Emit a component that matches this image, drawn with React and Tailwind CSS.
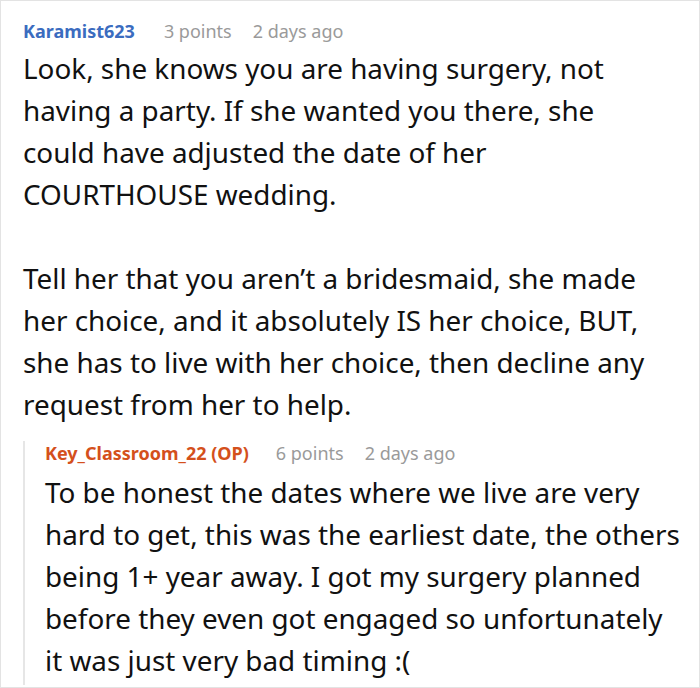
import React from "react";

const Meta = ({ name, color, points, ago, className = "" }) => (
  <div className={`flex items-baseline text-[18px] leading-[24px] whitespace-nowrap ${className}`}>
    <span className={`font-bold ${color}`}>{name}</span>
    <span className="ml-[29px] text-[#9a9a9a]">{points}</span>
    <span className="ml-[21px] text-[#9a9a9a]">{ago}</span>
  </div>
);

// comment bodies are kept with the line breaks of the original card
const Lines = ({ lines }) => (
  <>
    {lines.map((l, i) => (
      <div key={i} className="whitespace-nowrap">
        {l}
      </div>
    ))}
  </>
);

const App = () => {
  return (
    <div
      className="w-[700px] h-[688px] bg-white border border-[#e3e3e3] overflow-hidden text-[#111]"
      style={{ fontFamily: '"Noto Sans", sans-serif' }}
    >
      <div className="pl-[22px] pt-[18px]">
        <Meta name="Karamist623" color="text-[#3b6cbf]" points="3 points" ago="2 days ago" />
        <div className="mt-[4px] text-[27.85px] leading-[42px]">
          <Lines
            lines={[
              "Look, she knows you are having surgery, not",
              "having a party. If she wanted you there, she",
              "could have adjusted the date of her",
              "COURTHOUSE wedding.",
            ]}
          />
          <div className="mt-[42px]">
            <Lines
              lines={[
                "Tell her that you aren’t a bridesmaid, she made",
                "her choice, and it absolutely IS her choice, BUT,",
                "she has to live with her choice, then decline any",
                "request from her to help.",
              ]}
            />
          </div>
        </div>

        <div className="mt-[27px] border-l-2 border-[#e6e6e6] pl-[20px] pb-[4px]">
          <Meta
            name="Key_Classroom_22 (OP)"
            color="text-[#d4501c]"
            points="6 points"
            ago="2 days ago"
            className="-mt-[11px] [&>span:nth-child(2)]:ml-[27px]"
          />
          <div className="mt-[6px] text-[27.85px] leading-[42px]">
            <Lines
              lines={[
                "To be honest the dates where we live are very",
                "hard to get, this was the earliest date, the others",
                "being 1+ year away. I got my surgery planned",
                "before they even got engaged so unfortunately",
                "it was just very bad timing :(",
              ]}
            />
          </div>
        </div>
      </div>
    </div>
  );
};

export default App;
